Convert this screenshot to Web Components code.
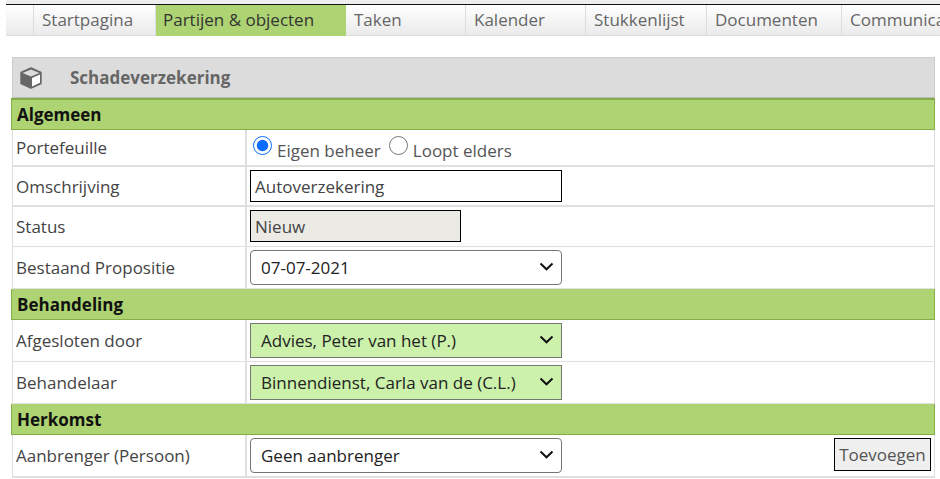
<!doctype html>
<html lang="nl">
  <head>
    <meta charset="UTF-8">
    <title>Schadeverzekering</title>
    <style>
      html, body { margin: 0; background: #fff; overflow: hidden; }
      body { font-family: "Open Sans", "Liberation Sans", sans-serif; font-size: 17px; color: #444; }
      #app { height: 479px; overflow: hidden; }
    </style>
  </head>
  <body>
    <div id="app">
      <tab-bar>
        <nav-tab w="28"></nav-tab>
        <nav-tab w="122">Startpagina</nav-tab>
        <nav-tab w="190" active>Partijen &amp; objecten</nav-tab>
        <nav-tab w="120">Taken</nav-tab>
        <nav-tab w="120">Kalender</nav-tab>
        <nav-tab w="121">Stukkenlijst</nav-tab>
        <nav-tab w="135">Documenten</nav-tab>
        <nav-tab w="120">Communicatie</nav-tab>
      </tab-bar>
      <form-panel>
        <panel-head>Schadeverzekering</panel-head>
        <form-section first>Algemeen</form-section>
        <form-row label="Portefeuille" h="37" line="2">
          <radio-pick name="p" checked>Eigen beheer</radio-pick>
          <radio-pick name="p">Loopt elders</radio-pick>
        </form-row>
        <form-row label="Omschrijving" h="40" line="2"><text-field value="Autoverzekering" w="312"></text-field></form-row>
        <form-row label="Status" h="40" line="1"><text-field value="Nieuw" w="211" readonly></text-field></form-row>
        <form-row label="Bestaand Propositie" h="42" line="1"><select-field value="07-07-2021"></select-field></form-row>
        <form-section>Behandeling</form-section>
        <form-row label="Afgesloten door" h="42" line="1"><select-field value="Advies, Peter van het (P.)" required></select-field></form-row>
        <form-row label="Behandelaar" h="42" line="1"><select-field value="Binnendienst, Carla van de (C.L.)" required></select-field></form-row>
        <form-section>Herkomst</form-section>
        <form-row label="Aanbrenger (Persoon)" h="43" line="2">
          <select-field value="Geen aanbrenger"></select-field>
          <add-button slot="end">Toevoegen</add-button>
        </form-row>
      </form-panel>
    </div>

    <script>
      const FONT = `17px "Open Sans", "Liberation Sans", sans-serif`

      function define(tag, html, setup) {
        customElements.define(tag, class extends HTMLElement {
          constructor() {
            super()
            this.attachShadow({mode: "open"}).innerHTML = html
          }
          connectedCallback() {
            if (setup) setup(this, this.shadowRoot)
          }
        })
      }

      define("tab-bar", `
        <style>
          :host { display: flex; height: 31px; margin-left: 6px; border-top: 4px solid #eee; }
          .tabs { display: flex; border-top: 1px solid #111; flex: 1; min-width: 0; }
        </style>
        <div class="tabs"><slot></slot></div>`)

      define("nav-tab", `
        <style>
          :host {
            display: block; flex: none; box-sizing: border-box; height: 31px; padding: 3px 0 0 8px;
            color: #666; line-height: 24px; white-space: nowrap; overflow: hidden;
            background: linear-gradient(#fff, #eaeaea);
            border-right: 1px solid #ddd; border-bottom: 1px solid #ddd;
          }
          :host([active]) { background: #add372; color: #333; border-color: #add372; padding-left: 7px; }
        </style>
        <slot></slot>`, (el) => {
          el.style.width = el.getAttribute("w") + "px"
        })

      define("form-panel", `
        <style>
          :host { display: block; margin: 22px 5px 0 11px; }
        </style>
        <slot></slot>`)

      define("panel-head", `
        <style>
          :host {
            display: flex; align-items: center; box-sizing: border-box; height: 41px; margin-left: 1px;
            background: #dcdcdc; border: 1px solid #ccc; border-bottom-color: #bbb;
            font-weight: 700; color: #666;
          }
          svg { width: 24px; height: 24px; margin: 1px 0 0 6px; flex: none; }
          span { margin-left: 27px; }
        </style>
        <svg viewBox="0 0 24 24">
          <path d="M12 2 L22 6.5 V17.5 L12 22 L2 17.5 V6.5 Z" fill="#666" stroke="#666" stroke-width="1.4" stroke-linejoin="round"/>
          <path d="M12 3.4 L20.5 7 L12 10.4 L3.5 7 Z" fill="#dcdcdc"/>
          <path d="M13 12 L21 8.6 V16.8 L13 20.4 Z" fill="#fff"/>
        </svg>
        <span><slot></slot></span>`)

      define("form-section", `
        <style>
          :host {
            display: flex; align-items: center; box-sizing: border-box; height: 31px; padding-left: 5px;
            background: #add372; border: 1px solid #84ae45; border-top: 0;
            font-weight: 700; color: #111;
          }
          :host([first]) { height: 32px; border-top: 2px solid #84ae45; }
        </style>
        <slot></slot>`)

      define("form-row", `
        <style>
          :host {
            display: grid; grid-template-columns: 234px 1fr; box-sizing: border-box; margin-left: 1px;
            border-bottom: 2px solid #e0e0e0; border-left: 1px solid #ddd; border-right: 1px solid #ddd;
          }
          .label { padding-left: 3px; display: flex; align-items: center; color: #444; border-right: 2px solid #e0e0e0; }
          .value { display: flex; align-items: flex-start; justify-content: space-between; padding: 3px 3px 0; }
          .main { display: flex; align-items: flex-start; gap: 8px; }
        </style>
        <div class="label"></div>
        <div class="value"><div class="main"><slot></slot></div><slot name="end"></slot></div>`, (el, root) => {
          root.querySelector(".label").textContent = el.getAttribute("label")
          el.style.height = el.getAttribute("h") + "px"
          el.style.borderBottomWidth = el.getAttribute("line") + "px"
        })

      define("radio-pick", `
        <style>
          :host { display: inline-flex; color: #555; }
          label { display: inline-flex; align-items: flex-start; gap: 5px; }
          input { width: 19px; height: 19px; margin: 3px 0 0 0; accent-color: #0a6cff; }
          span { line-height: 24px; margin-top: 6px; }
          :host([checked]) label { padding-left: 3px; }
        </style>
        <label><input type="radio"><span><slot></slot></span></label>`, (el, root) => {
          root.querySelector("input").checked = el.hasAttribute("checked")
        })

      define("text-field", `
        <style>
          :host { display: block; }
          input {
            display: block; box-sizing: border-box; height: 32px; padding: 0 4px; margin: 0;
            border: 1px solid #000; border-radius: 0; outline: 0; background: #fff; color: #444;
            font: ${FONT};
          }
          input[readonly] { background: #ebeae4; }
        </style>
        <input type="text">`, (el, root) => {
          const input = root.querySelector("input")
          input.value = el.getAttribute("value")
          input.readOnly = el.hasAttribute("readonly")
          input.style.width = el.getAttribute("w") + "px"
        })

      define("select-field", `
        <style>
          :host { display: block; position: relative; width: 312px; height: 35px; }
          select {
            display: block; box-sizing: border-box; width: 312px; height: 35px; margin: 0; padding: 0 32px 0 10px;
            border: 1px solid #767676; border-radius: 4px; background-color: #fff; color: #222;
            font: ${FONT}; appearance: none; -webkit-appearance: none;
          }
          :host([required]) select { background-color: #ccf1ab; border-radius: 0; }
          svg { position: absolute; right: 8px; top: 12px; width: 15px; height: 9px; pointer-events: none; }
        </style>
        <select></select>
        <svg viewBox="0 0 15 9"><path d="M1.5 1.5 L7.5 7.3 L13.5 1.5" fill="none" stroke="#111" stroke-width="2"/></svg>`, (el, root) => {
          const option = document.createElement("option")
          option.textContent = el.getAttribute("value")
          root.querySelector("select").append(option)
        })

      define("add-button", `
        <style>
          :host { display: block; }
          button {
            display: block; box-sizing: border-box; width: 97px; height: 33px; padding: 0; margin: 0;
            border: 1px solid #000; border-radius: 0; background: #efefef; color: #555;
            font: ${FONT};
          }
        </style>
        <button type="button"><slot></slot></button>`)
    </script>
  </body>
</html>
